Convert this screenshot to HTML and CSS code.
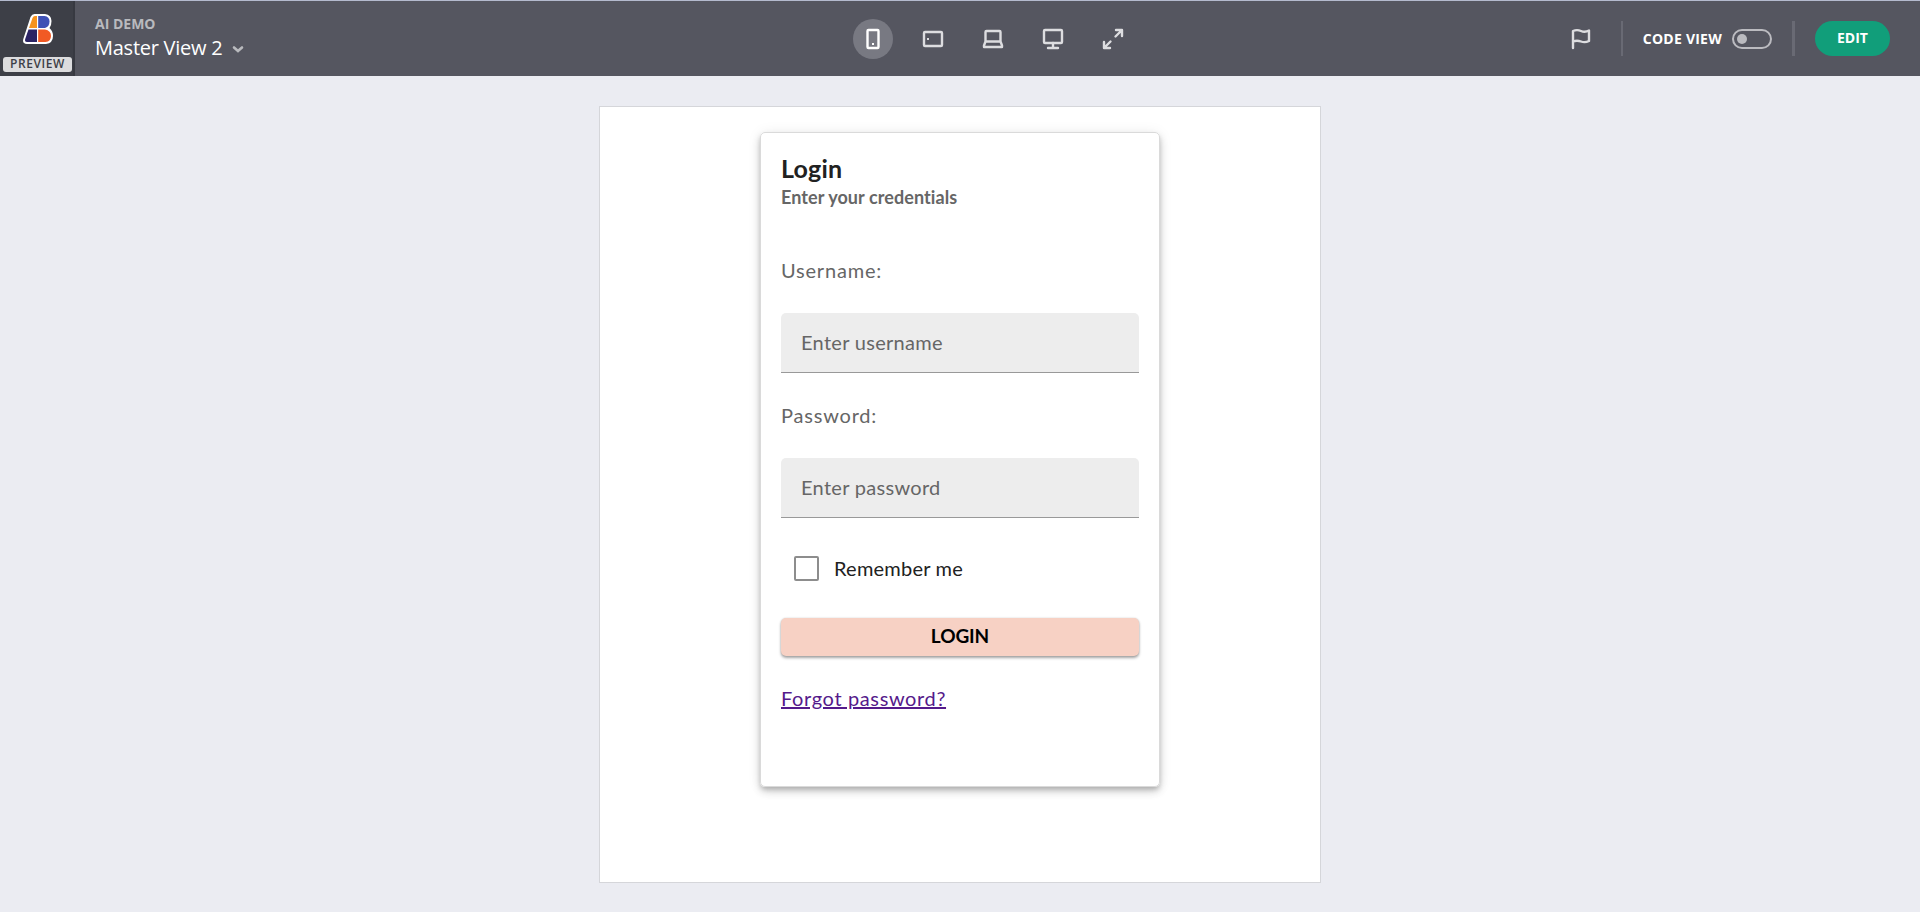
FILE: index.html
```html
<!DOCTYPE html>
<html lang="en">
<head>
<meta charset="utf-8">
<title>Master View 2</title>
<link rel="stylesheet" href="styles.css">
</head>
<body>
<header class="toolbar">
  <div class="brand">
    <svg class="brand-logo" width="30" height="30" viewBox="0 0 30 30">
      <path d="M11.500 0H22Q28.500 1 28.500 7Q28.500 11.500 26.500 14Q30 17 30 22Q30 29 23 30H4Q-1 30 .3 25L7.500 3Q9 0 11.500 0Z" fill="#fff"/>
      <path d="M12 2H14V14H6L9.500 4Q10.300 2 12 2Z" fill="#f7931e"/>
      <path d="M15.200 2H21.500Q26.500 2.500 26.500 7.500Q26.500 12.500 22 14H15.200Z" fill="#3f51b5"/>
      <path d="M5.500 15.500H14V28H4Q1.400 27.800 2.200 25Z" fill="#2b2364"/>
      <path d="M15.200 15.500H22Q28 16.500 28 22Q28 27.500 22.500 28H15.200Z" fill="#f15a24"/>
    </svg>
    <span class="badge">PREVIEW</span>
  </div>
  <div class="titles">
    <div class="app-name">AI DEMO</div>
    <div class="view-picker"><span class="view-name">Master View 2</span>
      <svg width="12" height="8" viewBox="0 0 12 8"><path d="M2 2.500L6 6L10 2.500" class="chevron"/></svg>
    </div>
  </div>
  <nav class="devices">
    <span class="device active"><svg width="24" height="24" viewBox="0 0 24 24"><rect x="6.500" y="3" width="11" height="18" rx="1"/><path class="dot" d="M11 16h2v2h-2z"/></svg></span>
    <span class="device"><svg width="24" height="24" viewBox="0 0 24 24"><rect x="3" y="5" width="18" height="14" rx="1"/><path class="dot" d="M6 11h2v2h-2z"/></svg></span>
    <span class="device"><svg width="24" height="24" viewBox="0 0 24 24"><path d="M4.500 14.500V5Q4.500 4 5.500 4H18.500Q19.500 4 19.500 5V14.500M4.500 14.500H19.500L21 18.500V20H3V18.500Z"/></svg></span>
    <span class="device"><svg width="24" height="24" viewBox="0 0 24 24"><rect x="3" y="3" width="18" height="13" rx="1"/><path d="M12 16v5M7 21h10"/></svg></span>
    <span class="device"><svg width="24" height="24" viewBox="0 0 24 24"><path d="M15 3h6v6M20.500 3.500L14.500 9.500M9 21H3v-6M3.500 20.500L9.500 14.500"/></svg></span>
  </nav>
  <div class="actions">
    <svg class="flag" width="24" height="24" viewBox="0 0 24 24"><path d="M4 21V4Q8 2.300 12 4T20 3.500V14Q16 16 12 14.500T4 14.500"/></svg>
    <span class="divider"></span>
    <span class="code-label">CODE VIEW</span>
    <span class="toggle"><span class="knob"></span></span>
    <span class="divider wide"></span>
    <button class="edit">EDIT</button>
  </div>
</header>
<main class="stage">
  <section class="canvas">
    <form class="card">
      <h1 class="card-title">Login</h1>
      <h2 class="card-subtitle">Enter your credentials</h2>
      <label class="label" for="user">Username:</label>
      <input class="field" id="user" type="text" placeholder="Enter username">
      <label class="label second" for="pass">Password:</label>
      <input class="field" id="pass" type="password" placeholder="Enter password">
      <label class="remember"><span class="box"></span><span>Remember me</span></label>
      <button class="login" type="button">LOGIN</button>
      <a class="forgot" href="#">Forgot password?</a>
    </form>
  </section>
</main>
</body>
</html>
```
FILE: styles.css
```css
* { box-sizing: border-box; }
body { margin: 0; height: 912px; overflow: hidden; background: #ebecf2; font-family: Lato, sans-serif; }
.toolbar { height: 76px; border-top: 1px solid #b4bace; background: #555660; display: grid; grid-template-columns: 1fr auto 1fr; grid-template-rows: 75px; color: #fff; }
.brand { width: 75px; height: 75px; background: linear-gradient(90deg, #3d3f47 73px, #373941 73px); display: flex; flex-direction: column; align-items: center; padding-top: 13px; grid-area: 1 / 1; }
.brand-logo { flex: none; margin-left: 1px; }
.badge { margin-top: 13px; width: 69px; height: 15px; border-radius: 3px; background: #dcdcde; color: #3d3f47; font: 600 12px/14px "Open Sans", sans-serif; text-align: center; letter-spacing: .6px; }
.titles { grid-area: 1 / 1; margin-left: 95px; padding-top: 14px; }
.app-name { font: 700 14px/18px "Open Sans", sans-serif; letter-spacing: 0; color: #b9babe; }
.view-picker { display: flex; align-items: center; gap: 10px; }
.view-name { font: 400 20px/30px "Open Sans", sans-serif; letter-spacing: -.25px; }
.view-picker svg { margin-top: 2px; }
.chevron { fill: none; stroke: #b9babe; stroke-width: 2.6; stroke-linecap: round; }
.devices { display: flex; gap: 20px; align-items: center; padding-top: 1px; margin-left: 66px; }
.device { width: 40px; height: 40px; border-radius: 50%; display: grid; place-items: center; color: #dddde0; }
.device.active { background: #787982; color: #fff; }
.device svg, .flag { fill: none; stroke: currentColor; stroke-width: 2.4; stroke-linejoin: round; stroke-linecap: round; }
.device .dot { fill: currentColor; stroke: none; }
.actions { display: flex; align-items: center; justify-content: flex-end; padding-right: 30px; }
.flag { color: #dddde0; margin-top: 1px; }
.divider { width: 2px; height: 35px; background: #696a74; margin: 0 20px 0 28px; }
.divider.wide { width: 3px; margin: 0 20px; }
.code-label { font: 700 14px/20px "Open Sans", sans-serif; letter-spacing: .25px; margin-right: 10px; white-space: nowrap; }
.toggle { width: 40px; height: 20px; margin-top: 1px; border: 2px solid #bbbbc0; border-radius: 10px; padding: 3px; }
.knob { display: block; width: 10px; height: 10px; border-radius: 50%; background: #bbbbc0; }
.edit { width: 75px; height: 35px; border: 0; border-radius: 18px; background: #119e7a; color: #fff; font: 700 14px/20px "Open Sans", sans-serif; padding: 0 0 2px; }
.stage { display: flex; justify-content: center; padding-top: 30px; }
.canvas { width: 722px; height: 777px; border: 1px solid #d5d6da; background: #fff; display: flex; justify-content: center; align-items: flex-start; padding-top: 25px; }
.card { width: 400px; height: 655px; border: 1px solid #dadada; border-radius: 5px; padding: 20px; display: flex; flex-direction: column; box-shadow: 0 3px 5px -1px rgba(0,0,0,.2), 0 5px 8px rgba(0,0,0,.14), 0 1px 14px rgba(0,0,0,.08); }
.card-title { margin: -1px 0 0; font-size: 25px; line-height: 32px; font-weight: 700; color: #212121; letter-spacing: .2px; }
.card-subtitle { margin: 1px 0 0; font-size: 18px; line-height: 24px; font-weight: 700; color: #666; letter-spacing: .08px; }
.label { margin-top: 49px; font-size: 20px; line-height: 24px; letter-spacing: .8px; color: #666; }
.second { margin-top: 30px; }
.field { width: 100%; height: 60px; margin: 31px 0 0; padding: 0 20px 2px; border: 0; border-bottom: 1px solid #999; border-radius: 5px 5px 0 0; background: #ededed; font: 400 20px/24px Lato, sans-serif; letter-spacing: .3px; }
.field::placeholder { color: #666; opacity: 1; }
.remember { display: flex; align-items: center; gap: 15px; height: 26px; margin: 37px 0 0 13px; font-size: 20px; letter-spacing: .22px; color: #212121; }
.box { width: 25px; height: 25px; border: 2px solid #8d8d8d; border-radius: 2px; }
.login { height: 38px; flex: none; margin-top: 37px; padding: 0 0 2px; border: 0; border-radius: 5px; background: #f7d1c4; color: #000; font: 700 19px/24px Lato, sans-serif; letter-spacing: -.1px; box-shadow: 0 2px 3px rgba(0,0,0,.35), 0 0 2px rgba(0,0,0,.15); }
.forgot { align-self: flex-start; margin-top: 30px; font-size: 20px; line-height: 24px; letter-spacing: .63px; color: #551a8b; }
```
